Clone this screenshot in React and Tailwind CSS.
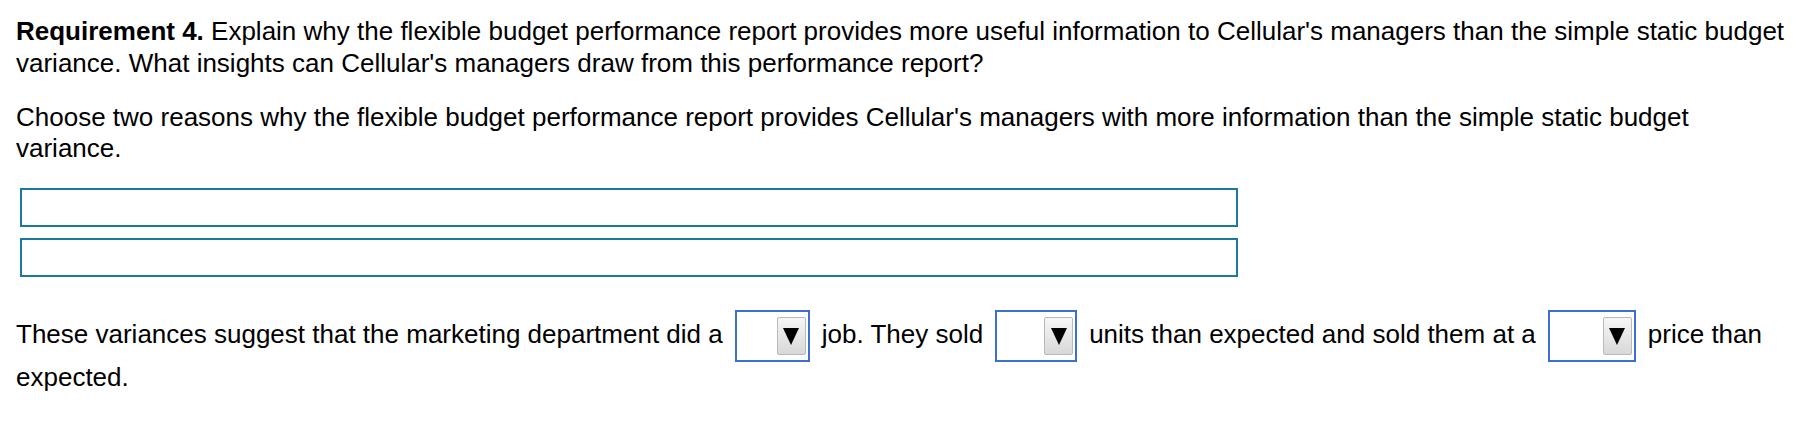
export default function App() {
  return (
    <div className="w-[1812px] h-[440px] bg-white text-black font-['Liberation_Sans',Arial,sans-serif] text-[26px] leading-[31px] pl-4 pr-5 pt-[15px]">
      <p className="leading-[32px]">
        <span className="font-bold">Requirement 4.</span> Explain why the flexible budget performance report provides more useful information to Cellular's managers than the simple static budget variance. What insights can Cellular's managers draw from this performance report?
      </p>

      <p className="mt-[23px]">
        Choose two reasons why the flexible budget performance report provides Cellular's managers with more information than the simple static budget variance.
      </p>

      {/* answer boxes */}
      <div className="mt-6 ml-1 flex flex-col gap-[11px]">
        <AnswerBox />
        <AnswerBox />
      </div>

      <p className="mt-[33px] leading-[31px]">
        These variances suggest that the marketing department did a<Dropdown w="w-[75px]" />job. They sold<Dropdown w="w-[82px]" />units than expected and sold them at a<Dropdown w="w-[88px]" />price than expected.
      </p>
    </div>
  );
}

function AnswerBox() {
  return <div className="w-[1218px] h-[39px] border-2 border-[#1b7a9b] bg-white"></div>;
}

function Dropdown({ w }) {
  return (
    <span className={`${w} h-[52px] mx-3 inline-flex justify-end items-start align-middle border-2 border-[#3b6fd0] bg-white pt-[5px] pr-[2px]`}>
      <span className="w-[29px] h-[38px] flex items-center justify-center border border-[#b9b9b9] rounded-[2px] bg-gradient-to-b from-[#f7f7f7] to-[#d8d8d8]">
        <svg width="18" height="20" viewBox="0 0 18 20">
          <path d="M1 2 L17 2 L9 19 Z" fill="#000" />
        </svg>
      </span>
    </span>
  );
}
